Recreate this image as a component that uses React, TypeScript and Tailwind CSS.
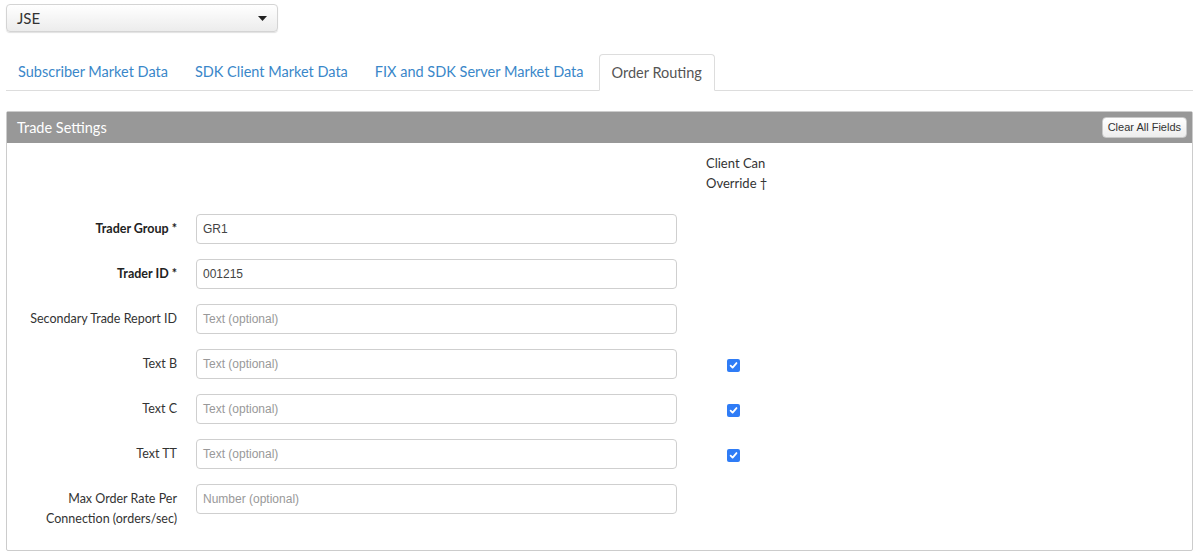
const tabs = ['Subscriber Market Data', 'SDK Client Market Data', 'FIX and SDK Server Market Data', 'Order Routing'];

type Row = {
  label: string[];
  bold?: boolean;
  value?: string;
  placeholder: string;
  override?: boolean;
};

const rows: Row[] = [
  { label: ['Trader Group *'], bold: true, value: 'GR1', placeholder: '' },
  { label: ['Trader ID *'], bold: true, value: '001215', placeholder: '' },
  { label: ['Secondary Trade Report ID'], placeholder: 'Text (optional)' },
  { label: ['Text B'], placeholder: 'Text (optional)', override: true },
  { label: ['Text C'], placeholder: 'Text (optional)', override: true },
  { label: ['Text TT'], placeholder: 'Text (optional)', override: true },
  { label: ['Max Order Rate Per', 'Connection (orders/sec)'], placeholder: 'Number (optional)' },
];

function Check() {
  return (
    <div className="w-[13px] h-[13px] rounded-[2px] bg-[#2f7cf6] flex items-center justify-center">
      <svg width="9" height="9" viewBox="0 0 10 10">
        <path d="M1.8 5.2 L4 7.4 L8.3 2.3" fill="none" stroke="white" strokeWidth="2" strokeLinecap="round" strokeLinejoin="round" />
      </svg>
    </div>
  );
}

export default function App() {
  return (
    <div className="min-h-[553px] bg-white pl-[6px] pr-[4px] pt-[4px] font-['Lato','Noto_Sans',sans-serif] text-[#333]">
      {/* market select */}
      <div className="w-[272px] h-[28px] rounded-[4px] border border-[#d4d4d4] bg-gradient-to-b from-white to-[#ececec] shadow-[0_1px_1px_rgba(0,0,0,0.12)] flex items-center justify-between pl-[10px] pr-[10px]">
        <span className="text-[15px] text-[#333]">JSE</span>
        <svg width="9" height="5" viewBox="0 0 9 5">
          <path d="M0 0 H9 L4.5 5 Z" fill="#222" />
        </svg>
      </div>

      {/* tabs */}
      <div className="mt-[22px] flex border-b border-[#dddddd] h-[37px]">
        {tabs.map((t, i) =>
          i === tabs.length - 1 ? (
            <div
              key={t}
              className="h-[37px] px-[12px] flex items-center border border-[#dddddd] border-b-white rounded-t-[4px] bg-white text-[14.5px] text-[#555] -mb-px"
            >
              {t}
            </div>
          ) : (
            <div key={t} className="h-[36px] px-[12px] mr-[3px] flex items-center text-[14.5px] text-[#3a87c9]">
              {t}
            </div>
          )
        )}
      </div>

      {/* panel */}
      <div className="mt-[20px] border border-[#cccccc] rounded-[2px]">
        <div className="h-[31px] bg-[#989898] flex items-center justify-between pl-[10px] pr-[5px]">
          <span className="text-[14.5px] text-white">Trade Settings</span>
          <button className="h-[21px] px-[5px] rounded-[4px] border border-[#c8c8c8] bg-gradient-to-b from-white to-[#ededed] text-[11px] text-[#333] font-['Liberation_Sans',Arial,sans-serif] leading-none">
            Clear All Fields
          </button>
        </div>

        <div className="pt-[10px] pb-[21px]">
          <div className="ml-[699px] text-[13px] leading-[20px] text-[#333]">
            <div>Client Can</div>
            <div>Override †</div>
          </div>

          <div className="mt-[21px] flex flex-col gap-[15px]">
            {rows.map((r) => (
              <div key={r.label.join(' ')} className={`flex ${r.label.length > 1 ? 'items-start' : 'items-center'}`}>
                <div
                  className={`w-[170px] text-right leading-[20px] ${r.bold ? 'text-[12.5px] font-bold text-[#222]' : 'text-[12.5px] text-[#333]'} ${r.label.length > 1 ? 'pt-[5px]' : ''}`}
                >
                  {r.label.map((l) => (
                    <div key={l}>{l}</div>
                  ))}
                </div>
                <div className="ml-[19px] w-[481px] h-[30px] rounded-[4px] border border-[#cfcfcf] flex items-center pl-[6px] text-[12px] font-['Liberation_Sans',Arial,sans-serif]">
                  {r.value ? (
                    <span className="text-[#444]">{r.value}</span>
                  ) : (
                    <span className="text-[#999]">{r.placeholder}</span>
                  )}
                </div>
                {r.override && (
                  <div className="ml-[50px] mt-[2px]">
                    <Check />
                  </div>
                )}
              </div>
            ))}
          </div>
        </div>
      </div>
    </div>
  );
}
